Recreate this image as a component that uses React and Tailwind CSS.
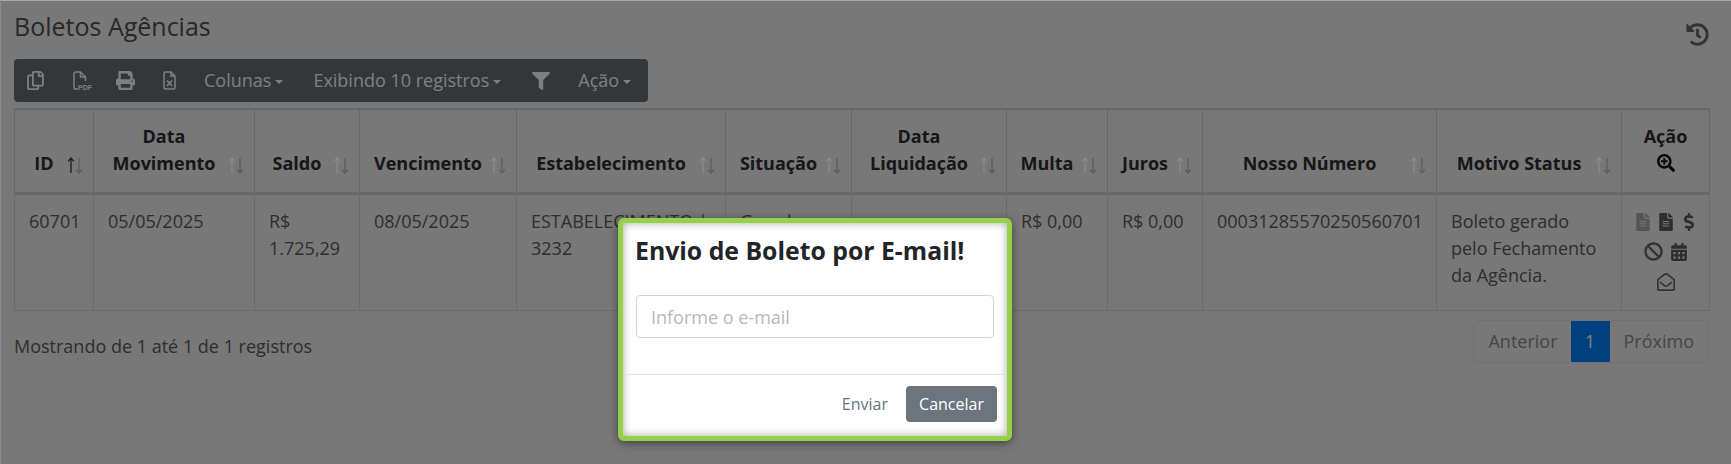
import React from "react";
import { FaRegCopy, FaPrint, FaFilter, FaFileAlt, FaDollarSign, FaBan, FaCalendarAlt, FaRegEnvelopeOpen, FaSearchPlus, FaHistory } from "react-icons/fa";

const Sort = ({ active }) => (
  <span className="absolute right-[10px] bottom-[18px] z-10 flex items-center">
    <svg width="8" height="17" viewBox="0 0 8 17" className={active ? "text-[#1c1c1c]" : "text-[#8c8c8c]"}><path d="M4 1 L4 16 M1.2 4.2 L4 1 L6.8 4.2" fill="none" stroke="currentColor" strokeWidth="1.3" /></svg>
    <svg width="8" height="17" viewBox="0 0 8 17" className="text-[#5c5c5c]"><path d="M4 1 L4 16 M1.2 12.8 L4 16 L6.8 12.8" fill="none" stroke="currentColor" strokeWidth="1.3" /></svg>
  </span>
);

const cols = [
  ["ID", 79, true], ["Data Movimento", 161], ["Saldo", 105], ["Vencimento", 157], ["Estabelecimento", 209], ["Situação", 126],
  ["Data Liquidação", 155], ["Multa", 101], ["Juros", 95], ["Nosso Número", 234], ["Motivo Status", 185],
];

const Caret = () => <span className="ml-[4px] inline-block align-middle border-x-[4.5px] border-t-[4.5px] border-x-transparent border-t-current"></span>;

const PdfIcon = () => (
  <svg width="19" height="19" viewBox="0 0 19 19" fill="none" stroke="currentColor" strokeWidth="1.5">
    <path d="M5 18H2.8Q1 18 1 16.2V2.8Q1 1 2.8 1H7.5L12.5 6V10" />
    <path d="M7.5 1V6H12.5" />
    <text x="5" y="18.8" fontSize="7" fontWeight="700" fill="currentColor" stroke="none" fontFamily="'Liberation Sans'">PDF</text>
  </svg>
);
const XlsIcon = () => (
  <svg width="13" height="19" viewBox="0 0 13 19" fill="none" stroke="currentColor" strokeWidth="1.5">
    <path d="M2.5 1H8L12 5V16.5Q12 18 10.5 18H2.5Q1 18 1 16.5V2.5Q1 1 2.5 1Z" />
    <path d="M8 1V5H12" />
    <path d="M4 9.5L9 15M9 9.5L4 15" strokeWidth="1.6" />
  </svg>
);

const td = "border border-[#d6d6d6] px-[14px] pt-[13px] align-top";

export default function App() {
  return (
    <div className="relative h-[464px] w-[1731px] overflow-hidden bg-[#f0f0f0] font-['Open_Sans',sans-serif] text-[18px] text-[#5c5c5c]">
      <div className="px-[14px] pt-[10px]">
        <div className="flex items-start justify-between">
          <h1 className="text-[25px] font-normal leading-[32px] text-[#505050]">Boletos Agências</h1>
          <FaHistory className="mt-[13px] mr-[8px] text-[23px] text-[#666]" />
        </div>
        <div className="mt-[13px] flex h-[43px] w-[634px] items-center rounded-[4px] bg-[#666e75] pl-[12px] text-white">
          <FaRegCopy className="text-[19px]" />
          <span className="ml-[28px] flex"><PdfIcon /></span>
          <FaPrint className="ml-[24px] text-[19px]" />
          <span className="ml-[28px] flex"><XlsIcon /></span>
          <span className="ml-[28px]">Colunas<Caret /></span>
          <span className="ml-[30px]">Exibindo 10 registros<Caret /></span>
          <FaFilter className="ml-[31px] text-[18px]" />
          <span className="ml-[28px]">Ação<Caret /></span>
        </div>
        <table className="mt-[6px] w-[1695px] table-fixed border-collapse border border-t-2 border-[#d0d0d0]">
          <colgroup>
            {cols.map((c) => <col key={c[0]} style={{ width: c[1] }} />)}
            <col style={{ width: 88 }} />
          </colgroup>
          <thead>
            <tr className="h-[84px]">
              {cols.map((c) => (
                <th key={c[0]} className="relative border border-b-[3px] border-[#d0d0d0] pr-[30px] pl-[10px] pb-[15px] align-bottom text-center text-[18px] leading-[27px] font-bold text-[#2a2e33]">
                  {c[0]}
                  <Sort active={c[2]} />
                </th>
              ))}
              <th className="border border-b-[3px] border-[#d0d0d0] px-[10px] pb-[15px] align-bottom text-center text-[18px] leading-[27px] font-bold text-[#2a2e33]">
                Ação
                <span className="flex h-[27px] items-center justify-center"><FaSearchPlus className="text-[18px] text-[#111]" /></span>
              </th>
            </tr>
          </thead>
          <tbody>
            <tr className="h-[117px] text-[18px] leading-[27px]">
              <td className={td}>60701</td>
              <td className={td}>05/05/2025</td>
              <td className={td}>R$ 1.725,29</td>
              <td className={td}>08/05/2025</td>
              <td className={td}>ESTABELECIMENTO | 3232</td>
              <td className={td}>Gerado</td>
              <td className={td}></td>
              <td className={td}>R$ 0,00</td>
              <td className={td}>R$ 0,00</td>
              <td className={td}>00031285570250560701</td>
              <td className={td}>Boleto gerado pelo Fechamento da Agência.</td>
              <td className="border border-[#d6d6d6] pt-[12px] align-top">
                <div className="flex flex-col items-center text-[18px] text-[#5c5c5c]">
                  <div className="flex h-[30px] items-center gap-[5px]"><FaFileAlt className="text-[#aaa]" /><FaFileAlt className="text-[#5c5c5c]" /><FaDollarSign className="text-[#5c5c5c]" /></div>
                  <div className="flex h-[30px] items-center gap-[7px]"><FaBan className="text-[19px] text-[#666]" /><FaCalendarAlt className="text-[#5c5c5c]" /></div>
                  <div className="flex h-[30px] items-center"><FaRegEnvelopeOpen className="text-[#666]" /></div>
                </div>
              </td>
            </tr>
          </tbody>
        </table>
        <div className="mt-[9px] mr-[8px] flex items-start justify-between">
          <span className="mt-[13px] text-[18px] leading-[27px]">Mostrando de 1 até 1 de 1 registros</span>
          <div className="flex h-[43px] items-stretch overflow-hidden rounded-[4px] border border-[#dee2e6] text-[18px] text-[#8a8a8a]">
            <span className="flex items-center pr-[13px] pl-[14px]">Anterior</span>
            <span className="flex w-[39px] items-center justify-center bg-[#0080ff] text-white">1</span>
            <span className="flex items-center px-[14px]">Próximo</span>
          </div>
        </div>
      </div>

      <div className="absolute inset-0 border-t border-l border-t-[#a8a8a8] border-l-[#8a8a8a] bg-black/50"></div>

      <div className="absolute top-[218px] left-[618px] z-20 w-[394px] rounded-[6px] border-[5px] border-[#95d047] bg-white shadow-[0_2px_8px_rgba(0,0,0,0.5),inset_0_0_8px_rgba(0,0,0,0.35)]">
        <h2 className="px-[12px] pt-[9px] text-[24.8px] leading-[36px] font-bold text-[#212529]">Envio de Boleto por E-mail!</h2>
        <div className="px-[13px] pt-[27px] pb-[36px]">
          <input readOnly placeholder="Informe o e-mail" className="block h-[43px] w-full rounded-[4px] border border-[#ced4da] px-[14px] text-[18px] leading-[27px] outline-none placeholder:text-[#b8b8b8]" />
        </div>
        <div className="flex h-[62px] items-start justify-end border-t border-[#dee2e6] pt-[11px] pr-[10px]">
          <span className="mt-[6px] mr-[18px] text-[16px] text-[#6c757d]">Enviar</span>
          <span className="flex h-[36px] w-[91px] items-center justify-center rounded-[4px] bg-[#6c757d] text-[16px] text-white">Cancelar</span>
        </div>
      </div>
    </div>
  );
}
